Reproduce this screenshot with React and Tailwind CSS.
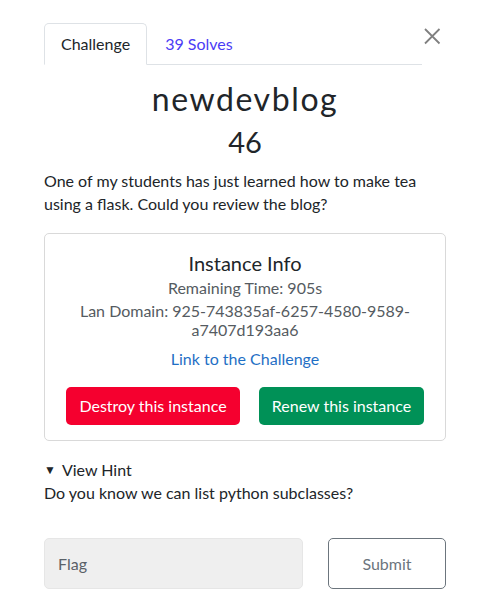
export default function App() {
  return (
    <div className="w-[494px] h-[609px] bg-white relative overflow-hidden text-[#212529]" style={{ fontFamily: "Lato, 'Noto Sans', sans-serif" }}>
      <div className="flex items-start pt-[23px] pl-[44px] pr-[53px]">
        <div className="flex w-[378px] border-b border-[#dee2e6]">
          <div className="h-[42px] -mb-px px-[16px] flex items-center border border-[#dee2e6] border-b-white rounded-t-[5px] bg-white text-[16px] text-[#212529]">
            Challenge
          </div>
          <div className="h-[41px] px-[18px] flex items-center text-[16px] text-[#4b3cf5]">39 Solves</div>
        </div>
        <div className="ml-auto mt-[4px]">
          <svg width="18" height="18" viewBox="0 0 18 18">
            <path d="M2 2 L16.5 16.5 M16.5 2 L2 16.5" stroke="#808080" strokeWidth="1.8" />
          </svg>
        </div>
      </div>
      <div className="px-[44px] pr-[48px]">
        <h2 className="mt-[15px] text-center text-[32px] leading-[38px] tracking-[1.6px] text-[#212529]">newdevblog</h2>
        <h3 className="mt-[6px] text-center text-[29px] leading-[36px] text-[#212529]">46</h3>
        <p className="mt-[9px] text-[16px] leading-[23px] text-[#212529]">
          One of my students has just learned how to make tea using a flask. Could you review the blog?
        </p>
        <div className="mt-[18px] border border-[#d9d9d9] rounded-[5px] pt-[17px] pb-[15px] px-[20px] text-center">
          <div className="text-[20px] leading-[24px] text-[#212529]">Instance Info</div>
          <div className="mt-[2px] text-[16px] leading-[21px] text-[#555b61]">Remaining Time: 905s</div>
          <div className="mt-[3px] text-[16px] leading-[19px] text-[#555b61]">
            Lan Domain: 925-743835af-6257-4580-9589-<br />a7407d193aa6
          </div>
          <div className="mt-[8px] text-[16px] leading-[24px] text-[#1f6fc5]">Link to the Challenge</div>
          <div className="mt-[16px] flex justify-between px-[1px]">
            <button className="h-[38px] w-[174px] rounded-[5px] bg-[#f5002f] text-white text-[16px]">Destroy this instance</button>
            <button className="h-[38px] w-[165px] rounded-[5px] bg-[#009157] text-white text-[16px]">Renew this instance</button>
          </div>
        </div>
        <div className="mt-[18px] text-[16px] leading-[22px] flex items-center">
          <span className="text-[12px] mr-[6px]">▼</span>View Hint
        </div>
        <p className="mt-[0px] text-[16px] leading-[24px]">Do you know we can list python subclasses?</p>
        <div className="mt-[33px] flex items-center">
          <div className="w-[259px] h-[51px] bg-[#efefef] border border-[#e6e6e6] rounded-[5px] flex items-center px-[13px] text-[16px] text-[#5a6168]">
            Flag
          </div>
          <button className="ml-auto w-[118px] h-[51px] border border-[#6c757d] rounded-[5px] text-[16px] text-[#6c757d]">Submit</button>
        </div>
      </div>
    </div>
  );
}
